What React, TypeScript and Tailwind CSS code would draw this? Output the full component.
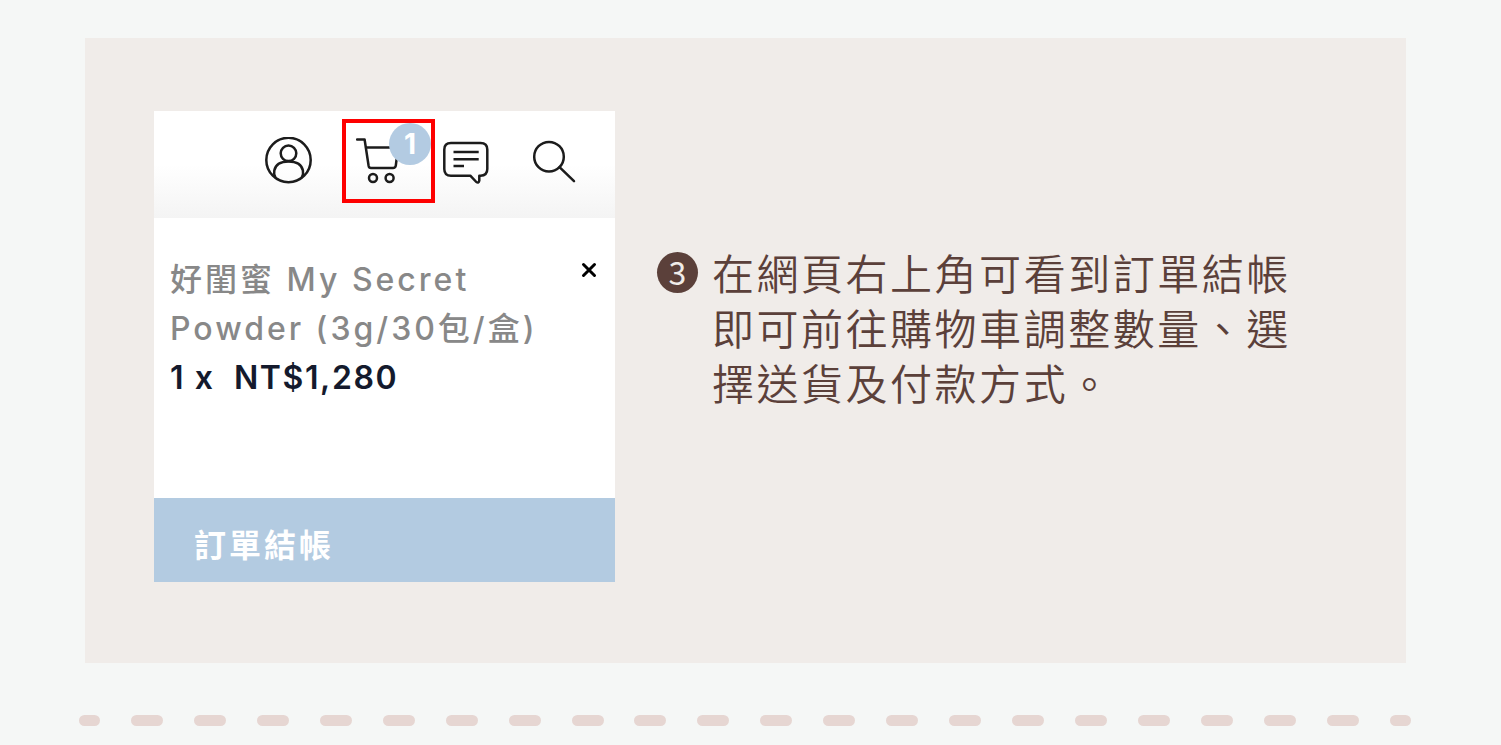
import React from "react";
import { clsx } from "clsx";

const DASH_COUNT = 22;

const instructionText = [
  "在網頁右上角可看到訂單結帳",
  "即可前往購物車調整數量、選",
  "擇送貨及付款方式。",
].join("\n");

const iconProps = {
  viewBox: "0 0 48 48",
  fill: "none",
  stroke: "currentColor",
  strokeWidth: 2.5,
  strokeLinecap: "round" as const,
  strokeLinejoin: "round" as const,
  className: "block size-12 shrink-0",
  "aria-hidden": true,
};

function AccountIcon() {
  return (
    <svg {...iconProps}>
      <circle cx="23.5" cy="23" r="22.2" />
      <circle cx="23.5" cy="16.3" r="7.8" />
      <path d="M10.4 40.3C8.8 37.8 8.8 36 9.3 33.5C10.4 27.5 15.5 24.4 23.5 24.4S36.8 27.5 37.9 33.5C38.4 36 38.4 37.8 36.8 40.3" />
    </svg>
  );
}

function CartIcon() {
  return (
    <svg {...iconProps}>
      <path d="M1 2.5H8.6L12.6 28.8Q13 31 15 31H37Q39.4 31 39.8 28.6L42 11" />
      <path d="M10.2 10.5H42" />
      <circle cx="17" cy="41" r="4" />
      <circle cx="33.6" cy="41" r="4" />
    </svg>
  );
}

function MessageIcon() {
  return (
    <svg {...iconProps}>
      <path d="M9 6H38.5Q45.3 6 45.3 12.5V32Q45.3 38.7 38.5 38.7H37.3V43.5Q36.8 46.5 34.3 45L28.3 38.7H9Q2.3 38.7 2.3 32V12.5Q2.3 6 9 6Z" />
      <path d="M11.5 15H36.7M11.5 22.3H36.7M11.5 29H22" strokeLinecap="butt" />
    </svg>
  );
}

function SearchIcon() {
  return (
    <svg {...iconProps}>
      <circle cx="19" cy="19.7" r="14.8" />
      <path d="M29.5 30.2L44 44.2" />
    </svg>
  );
}

function CartHeader() {
  return (
    <header className="flex items-center justify-end bg-linear-to-b from-white from-50% to-[#f4f4f4] pt-[8px] pr-[37px] pb-[15px] text-[#1c1c1c]">
      <button type="button" aria-label="會員" className="mr-[29px]">
        <AccountIcon />
      </button>
      <button
        type="button"
        aria-label="購物車"
        className="relative mr-[7px] flex h-[84px] w-[93px] items-center border-4 border-[#fe0000] pl-[10px]"
      >
        <CartIcon />
        <span className="absolute top-0 right-0 flex size-[42px] items-center justify-center rounded-full bg-[#b3cbe2] text-[28px] leading-none font-bold text-white">
          1
        </span>
      </button>
      <button type="button" aria-label="訊息" className="mr-[40px]">
        <MessageIcon />
      </button>
      <button type="button" aria-label="搜尋">
        <SearchIcon />
      </button>
    </header>
  );
}

function CartCard() {
  return (
    <section className="w-[461px] shrink-0 bg-white font-['Inter','Noto_Sans_CJK_TC',sans-serif]">
      <CartHeader />

      <div className="flex items-start justify-between pt-[37px] pr-[18px] pb-[96px] pl-[16px] text-[32px] leading-[49px]">
        <div>
          <p className="font-medium tracking-[3px] text-[#888888]">
            好閨蜜 My Secret
            <br />
            Powder (3g/30包/盒)
          </p>
          <p className="font-semibold tracking-wider whitespace-pre text-[#141a2d]">1 x  NT$1,280</p>
        </div>
        <button type="button" aria-label="移除" className="mt-[7px] text-black">
          <svg viewBox="0 0 16 16" className="block size-4" stroke="currentColor" strokeWidth="3" strokeLinecap="round">
            <path d="M2.5 2.5L13.5 13.5M13.5 2.5L2.5 13.5" />
          </svg>
        </button>
      </div>

      <button
        type="button"
        className="block w-full bg-[#b3cbe1] pt-[23px] pb-[12px] pl-[40px] text-left text-[32px] leading-[49px] font-bold tracking-[3px] text-white"
      >
        訂單結帳
      </button>
    </section>
  );
}

function Instruction() {
  return (
    <div className="flex items-start gap-[14px] pt-[133px] font-['Noto_Sans_CJK_TC',sans-serif] text-[#5b403a]">
      <span className="mt-[8px] flex size-[41px] shrink-0 items-center justify-center rounded-full bg-[#5b403a] pb-[4px] text-[32px] leading-none text-[#f0ece9]">
        3
      </span>
      <p className="text-[42px] leading-[55px] font-[350] tracking-[0.06em] whitespace-pre">
        {instructionText}
      </p>
    </div>
  );
}

function DashedDivider() {
  return (
    <div className="mt-[52px] mr-[90px] ml-[79px] flex justify-between" role="separator">
      {Array.from({ length: DASH_COUNT }, (_, i) => (
        <span
          key={i}
          className={clsx(
            "h-[11px] rounded-full bg-[#e6d6d2]",
            i === 0 || i === DASH_COUNT - 1 ? "w-[21px]" : "w-[32px]"
          )}
        />
      ))}
    </div>
  );
}

export default function App() {
  return (
    <main className="flow-root min-h-screen bg-[#f5f7f6]">
      <div className="mt-[38px] mr-[95px] ml-[85px] flex items-start gap-[42px] bg-[#f0ece9] pt-[73px] pb-[81px] pl-[69px]">
        <CartCard />
        <Instruction />
      </div>
      <DashedDivider />
    </main>
  );
}
